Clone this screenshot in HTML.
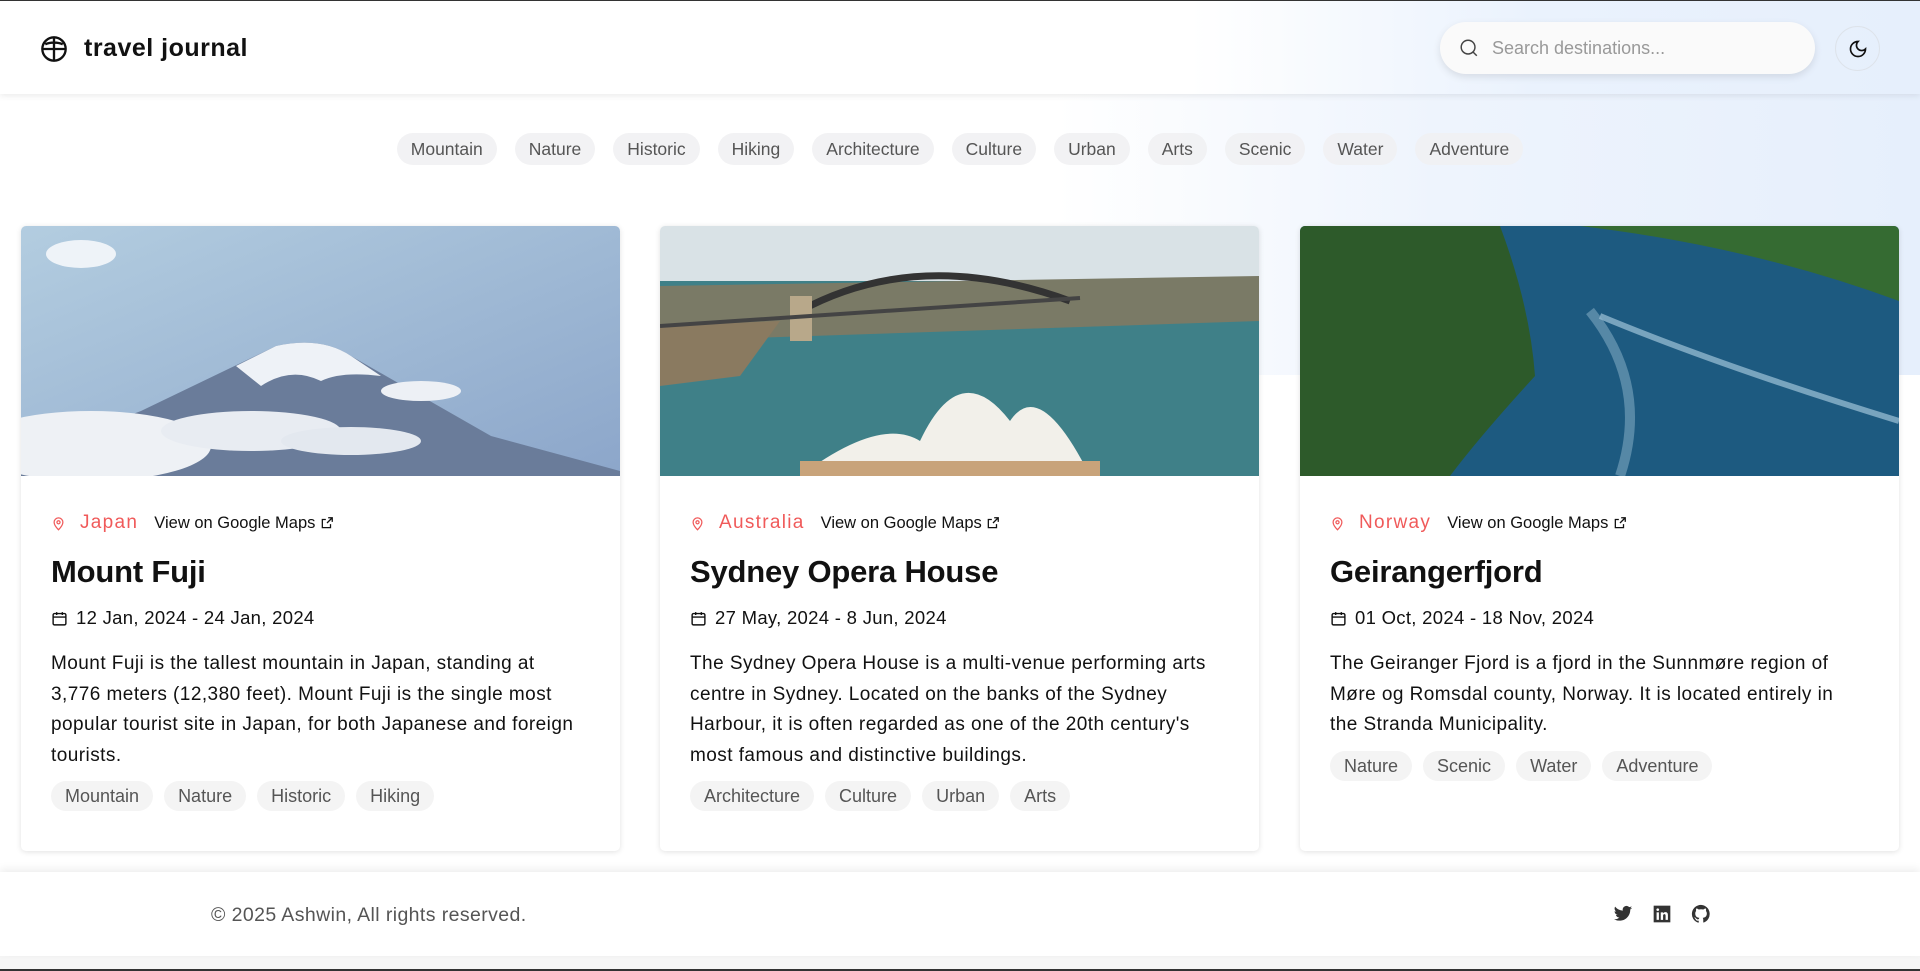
<!DOCTYPE html>
<html><head><meta charset="utf-8"><style>
*{box-sizing:border-box;margin:0;padding:0}
body{width:1920px;height:971px;overflow:hidden;font-family:"Liberation Sans",sans-serif;color:#111;background:#fff;position:relative}
.bg{position:absolute;left:0;top:0;width:1920px;height:375px;background:linear-gradient(90deg,#fff 0%,#fff 55%,#eef4fd 75%,#e6effc 100%)}
.topline{position:absolute;left:0;top:0;width:1920px;height:1px;background:#333;z-index:5}
header{position:absolute;left:0;top:1px;width:1920px;height:93px;background:linear-gradient(90deg,#fff 0%,#fff 62%,#eaf2fd 80%,#e6effc 100%);box-shadow:0 2px 6px rgba(0,0,0,.08);z-index:3}
.logo{position:absolute;left:40px;top:33px;display:flex;align-items:center;gap:16px;font-size:25px;font-weight:bold;letter-spacing:.5px}
.search{position:absolute;left:1440px;top:21px;width:375px;height:52px;border-radius:26px;background:#fafafa;box-shadow:0 3px 8px rgba(0,0,0,.1);display:flex;align-items:center;padding-left:18px;gap:12px;color:#999;font-size:18px}
.moon{position:absolute;left:1835px;top:25px;width:45px;height:45px;border-radius:50%;border:1px solid #dde3ea;display:flex;align-items:center;justify-content:center}
.filters{position:absolute;top:133px;left:0;width:1920px;display:flex;justify-content:center;gap:18px;z-index:2}
.tag{display:inline-block;height:32px;line-height:32px;padding:0 14px;border-radius:16px;background:rgba(240,240,242,.85);color:#555;font-size:17.5px}
.card{position:absolute;top:226px;width:599px;height:625px;background:#fff;border-radius:5px;box-shadow:0 1px 6px rgba(0,0,0,.12);overflow:hidden;z-index:2}
.img{height:250px;position:relative;overflow:hidden}
.body{padding:0 30px}
.loc{margin-top:37px;display:flex;align-items:center;font-size:16.5px;height:20px}
.loc .c{color:#f05a5a;font-size:19px;letter-spacing:1.3px;margin:0 16px 0 14px}
h2{font-size:31px;font-weight:bold;margin-top:21px;letter-spacing:-.2px}
.date{display:flex;align-items:center;gap:8px;font-size:18.5px;margin-top:17px;letter-spacing:.3px}
.desc{font-size:19px;line-height:30.6px;margin-top:20px;color:#111;letter-spacing:.45px}
.tags{display:flex;gap:11px;margin-top:10px}
.tags .tag{height:30px;line-height:30px;background:#f4f4f4;font-size:18px}
footer{position:absolute;left:0;top:872px;width:1920px;height:84px;background:#fff;box-shadow:0 -3px 8px rgba(0,0,0,.07);z-index:2}
.copy{position:absolute;left:211px;top:32px;font-size:19.5px;color:#555;letter-spacing:.4px}
.icons{position:absolute;left:1613px;top:32px;display:flex;gap:19px}
.below{position:absolute;left:0;top:956px;width:1920px;height:13px;background:#f6f6f6}
.botline{position:absolute;left:0;top:969px;width:1920px;height:2px;background:#333}
</style></head><body>
<div class="bg"></div>
<div class="topline"></div>
<header>
<div class="logo"><svg width="28" height="28" viewBox="0 0 24 24" fill="none" stroke="#111" stroke-width="2"><circle cx="12" cy="12" r="10"/><path d="M2 12h20M12 2v20M4.5 8c4.5-2 10.5-2 15 0"/></svg>travel journal</div>
<div class="search"><svg width="22" height="22" viewBox="0 0 24 24" fill="none" stroke="#444" stroke-width="1.6"><circle cx="11" cy="11" r="7.5"/><path d="M16.5 16.5l4 4"/></svg>Search destinations...</div>
<div class="moon"><svg width="20" height="20" viewBox="0 0 24 24" fill="none" stroke="#111" stroke-width="2" stroke-linecap="round"><path d="M12 3a6 6 0 0 0 9 9 9 9 0 1 1-9-9z"/></svg></div>
</header>
<div class="filters"><span class="tag">Mountain</span><span class="tag">Nature</span><span class="tag">Historic</span><span class="tag">Hiking</span><span class="tag">Architecture</span><span class="tag">Culture</span><span class="tag">Urban</span><span class="tag">Arts</span><span class="tag">Scenic</span><span class="tag">Water</span><span class="tag">Adventure</span></div>

<div class="card" style="left:21px">
<div class="img"><svg width="599" height="250" viewBox="0 0 599 250" preserveAspectRatio="none">
<defs><linearGradient id="s1" x1="0" y1="0" x2="1" y2="1"><stop offset="0" stop-color="#b3cde0"/><stop offset="1" stop-color="#8ca6ca"/></linearGradient></defs>
<rect width="599" height="250" fill="url(#s1)"/>
<path d="M120 185 L255 120 Q300 110 330 130 L470 210 L599 245 L599 250 L0 250 L0 230 Z" fill="#6a7c9a"/>
<path d="M215 140 L255 120 Q300 110 330 130 L360 150 Q320 145 300 155 Q270 140 240 160 Z" fill="#eef2f7"/>
<ellipse cx="70" cy="220" rx="120" ry="35" fill="#eef1f5"/><ellipse cx="230" cy="205" rx="90" ry="20" fill="#e8ecf2"/><ellipse cx="400" cy="165" rx="40" ry="10" fill="#edf0f5"/><ellipse cx="330" cy="215" rx="70" ry="14" fill="#e3e8ef"/><ellipse cx="60" cy="28" rx="35" ry="14" fill="#eef3f8"/>
</svg></div>
<div class="body">
<div class="loc"><svg width="15" height="17" viewBox="0 0 24 24" fill="none" stroke="#f05a5a" stroke-width="2"><path d="M12 22s7-7 7-12a7 7 0 0 0-14 0c0 5 7 12 7 12z"/><circle cx="12" cy="10" r="2.5"/></svg><span class="c">Japan</span>View on Google Maps&nbsp;<svg width="14" height="14" viewBox="0 0 24 24" fill="none" stroke="#111" stroke-width="2.2"><path d="M14 3h7v7M21 3l-9 9M18 14v6H4V6h6"/></svg></div>
<h2>Mount Fuji</h2>
<div class="date"><svg width="17" height="17" viewBox="0 0 24 24" fill="none" stroke="#111" stroke-width="2"><rect x="3" y="5" width="18" height="16" rx="2"/><path d="M3 10h18M8 3v4M16 3v4"/></svg>12 Jan, 2024 - 24 Jan, 2024</div>
<div class="desc">Mount Fuji is the tallest mountain in Japan, standing at<br>3,776 meters (12,380 feet). Mount Fuji is the single most popular tourist site in Japan, for both Japanese and foreign tourists.</div>
<div class="tags"><span class="tag">Mountain</span><span class="tag">Nature</span><span class="tag">Historic</span><span class="tag">Hiking</span></div>
</div></div>

<div class="card" style="left:660px">
<div class="img"><svg width="599" height="250" viewBox="0 0 599 250" preserveAspectRatio="none">
<rect width="599" height="70" fill="#d9e2e6"/><rect y="55" width="599" height="195" fill="#3f8088"/>
<path d="M0 60 L599 50 L599 95 L0 115 Z" fill="#7a7a66"/>
<path d="M0 100 L120 95 L80 150 L0 160Z" fill="#8a7a60"/>
<path d="M140 85 Q260 20 410 75" stroke="#333" stroke-width="7" fill="none"/><rect x="130" y="70" width="22" height="45" fill="#b8a88a"/>
<path d="M0 100 L420 72" stroke="#444" stroke-width="4"/>
<path d="M140 250 Q220 190 260 215 Q300 130 350 195 Q380 150 430 250Z" fill="#f2f0ea"/>
<rect x="140" y="235" width="300" height="15" fill="#c8a37a"/>
</svg></div>
<div class="body">
<div class="loc"><svg width="15" height="17" viewBox="0 0 24 24" fill="none" stroke="#f05a5a" stroke-width="2"><path d="M12 22s7-7 7-12a7 7 0 0 0-14 0c0 5 7 12 7 12z"/><circle cx="12" cy="10" r="2.5"/></svg><span class="c">Australia</span>View on Google Maps&nbsp;<svg width="14" height="14" viewBox="0 0 24 24" fill="none" stroke="#111" stroke-width="2.2"><path d="M14 3h7v7M21 3l-9 9M18 14v6H4V6h6"/></svg></div>
<h2>Sydney Opera House</h2>
<div class="date"><svg width="17" height="17" viewBox="0 0 24 24" fill="none" stroke="#111" stroke-width="2"><rect x="3" y="5" width="18" height="16" rx="2"/><path d="M3 10h18M8 3v4M16 3v4"/></svg>27 May, 2024 - 8 Jun, 2024</div>
<div class="desc">The Sydney Opera House is a multi-venue performing arts<br>centre in Sydney. Located on the banks of the Sydney<br>Harbour, it is often regarded as one of the 20th century's<br>most famous and distinctive buildings.</div>
<div class="tags"><span class="tag">Architecture</span><span class="tag">Culture</span><span class="tag">Urban</span><span class="tag">Arts</span></div>
</div></div>

<div class="card" style="left:1300px">
<div class="img"><svg width="599" height="250" viewBox="0 0 599 250" preserveAspectRatio="none">
<rect width="599" height="250" fill="#1d5a80"/>
<path d="M0 0 L200 0 Q230 80 235 150 Q180 210 150 250 L0 250Z" fill="#2d5a2a"/>
<path d="M280 0 L599 0 L599 75 Q450 20 280 0Z" fill="#356b32"/>
<path d="M300 90 Q420 140 599 195" stroke="#9fc3d8" stroke-width="6" fill="none" opacity=".7"/>
<path d="M290 85 Q350 160 320 250" stroke="#8fb5cc" stroke-width="10" fill="none" opacity=".5"/>
</svg></div>
<div class="body">
<div class="loc"><svg width="15" height="17" viewBox="0 0 24 24" fill="none" stroke="#f05a5a" stroke-width="2"><path d="M12 22s7-7 7-12a7 7 0 0 0-14 0c0 5 7 12 7 12z"/><circle cx="12" cy="10" r="2.5"/></svg><span class="c">Norway</span>View on Google Maps&nbsp;<svg width="14" height="14" viewBox="0 0 24 24" fill="none" stroke="#111" stroke-width="2.2"><path d="M14 3h7v7M21 3l-9 9M18 14v6H4V6h6"/></svg></div>
<h2>Geirangerfjord</h2>
<div class="date"><svg width="17" height="17" viewBox="0 0 24 24" fill="none" stroke="#111" stroke-width="2"><rect x="3" y="5" width="18" height="16" rx="2"/><path d="M3 10h18M8 3v4M16 3v4"/></svg>01 Oct, 2024 - 18 Nov, 2024</div>
<div class="desc">The Geiranger Fjord is a fjord in the Sunnmøre region of<br>Møre og Romsdal county, Norway. It is located entirely in<br>the Stranda Municipality.</div>
<div class="tags"><span class="tag">Nature</span><span class="tag">Scenic</span><span class="tag">Water</span><span class="tag">Adventure</span></div>
</div></div>

<footer>
<div class="copy">© 2025 Ashwin, All rights reserved.</div>
<div class="icons">
<svg width="20" height="20" viewBox="0 0 24 24" fill="#333"><path d="M23 4.5a9 9 0 0 1-2.6.7 4.5 4.5 0 0 0 2-2.5 9 9 0 0 1-2.9 1.1A4.5 4.5 0 0 0 11.8 7.9 12.8 12.8 0 0 1 2.5 3.2a4.5 4.5 0 0 0 1.4 6 4.5 4.5 0 0 1-2-.6 4.5 4.5 0 0 0 3.6 4.5 4.5 4.5 0 0 1-2 .1 4.5 4.5 0 0 0 4.2 3.1A9 9 0 0 1 1 18.2 12.8 12.8 0 0 0 7.9 20c8.3 0 12.8-6.9 12.8-12.8v-.6A9 9 0 0 0 23 4.5z"/></svg>
<svg width="20" height="20" viewBox="0 0 24 24"><rect x="2" y="2" width="20" height="20" fill="#333"/><rect x="5.5" y="10" width="2.8" height="9" fill="#fff"/><circle cx="6.9" cy="6.8" r="1.6" fill="#fff"/><path d="M10.5 10h2.7v1.3c.5-.9 1.6-1.5 2.9-1.5 2.3 0 3 1.5 3 3.6V19h-2.8v-5c0-1.1-.3-1.9-1.4-1.9s-1.6.8-1.6 1.9v5h-2.8z" fill="#fff"/></svg>
<svg width="20" height="20" viewBox="0 0 24 24" fill="#333"><path d="M12 1a11 11 0 0 0-3.5 21.4c.6.1.8-.2.8-.5v-2c-3.1.7-3.7-1.4-3.7-1.4-.5-1.3-1.2-1.6-1.2-1.6-1-.7.1-.7.1-.7 1.1.1 1.7 1.1 1.7 1.1 1 1.7 2.6 1.2 3.2.9.1-.7.4-1.2.7-1.5-2.4-.3-5-1.2-5-5.4 0-1.2.4-2.2 1.1-2.9-.1-.3-.5-1.4.1-2.9 0 0 .9-.3 3 1.1a10.5 10.5 0 0 1 5.5 0c2.1-1.4 3-1.1 3-1.1.6 1.5.2 2.6.1 2.9.7.8 1.1 1.7 1.1 2.9 0 4.2-2.6 5.1-5 5.4.4.3.7 1 .7 2v3c0 .3.2.6.8.5A11 11 0 0 0 12 1z"/></svg>
</div>
</footer>
<div class="below"></div>
<div class="botline"></div>
</body></html>
